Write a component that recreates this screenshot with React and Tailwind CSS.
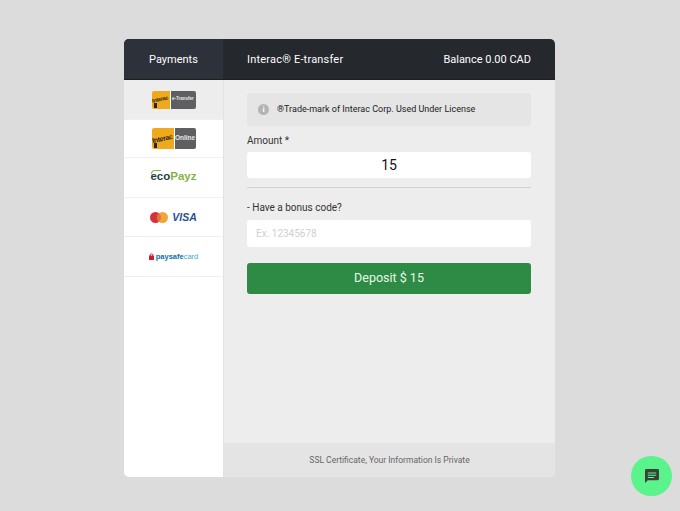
import React from 'react';

const InteracBadge = ({ label, yellow, height, small }) => (
  <div className={`flex ${height} w-[44px] rounded-[2px] overflow-hidden`}>
    <div className={`${yellow} bg-[#efa91d] relative flex items-center justify-center shrink-0`}>
      <span className={`${small ? 'text-[5.5px]' : 'text-[7px]'} font-bold text-[#2b2413] -rotate-12 leading-none tracking-tighter font-['Liberation_Sans',sans-serif]`}>Interac</span>
      <span className="absolute left-[2px] bottom-[1px] w-[3px] h-[5px] bg-[#2b2413]"></span>
    </div>
    <div className={`flex-1 min-w-0 bg-[#5f5f61] border-l border-white flex items-center justify-center font-bold text-[#e8e8e8] leading-none whitespace-nowrap font-['Liberation_Sans',sans-serif] ${small ? 'text-[4.5px]' : 'text-[6.5px]'}`}>{label}</div>
  </div>
);

const EcoPayz = () => (
  <div className="relative flex items-baseline font-bold text-[11.5px] leading-none mb-[1px] font-['Liberation_Sans',sans-serif]">
    <span className="text-[#1f3f4a]">eco</span>
    <span className="text-[#83b441]">Payz</span>
    <span className="absolute -top-[1px] left-[1px] w-[10px] h-[4px] border-t border-l border-[#83b441] rounded-tl-full"></span>
  </div>
);

const MasterVisa = () => (
  <div className="flex items-center gap-[4px]">
    <svg width="18" height="11" viewBox="0 0 18 11">
      <circle cx="5.5" cy="5.5" r="5.5" fill="#d3343c" />
      <circle cx="12.5" cy="5.5" r="5.5" fill="#f1a43a" />
      <path d="M9 1.3a5.5 5.5 0 0 1 0 8.4a5.5 5.5 0 0 1 0-8.4z" fill="#e8703a" />
    </svg>
    <span className="text-[10.5px] font-bold italic text-[#27518f] leading-none font-['Liberation_Sans',sans-serif]">VISA</span>
  </div>
);

const PaySafe = () => (
  <div className="flex items-center gap-[2px] text-[7.5px] leading-none font-['Liberation_Sans',sans-serif]">
    <svg width="5" height="7" viewBox="0 0 5 7">
      <path d="M1.2 3V2a1.3 1.3 0 0 1 2.6 0v1" fill="none" stroke="#c8202f" strokeWidth="0.8" />
      <rect x="0" y="2.6" width="5" height="4.4" rx="0.6" fill="#c8202f" />
    </svg>
    <span><span className="font-bold text-[#0f6fa8]">paysafe</span><span className="text-[#4aa3cf]">card</span></span>
  </div>
);

const methods = [
  { key: 'etransfer', h: 'h-[40px] bg-[#ededed]', logo: <InteracBadge label="e-Transfer" yellow="w-[18px]" height="h-[18px]" small /> },
  { key: 'online', h: 'h-[38px] bg-white', logo: <InteracBadge label="Online" yellow="w-[22px]" height="h-[21px]" /> },
  { key: 'eco', h: 'h-[40px] bg-white', logo: <EcoPayz /> },
  { key: 'cards', h: 'h-[39px] bg-white', logo: <MasterVisa /> },
  { key: 'paysafe', h: 'h-[40px] bg-white', logo: <PaySafe /> },
];

const App = () => {
  return (
    <div className="w-[680px] h-[511px] bg-[#dcdcdc] pt-[39px] pl-[124px] overflow-hidden relative font-['Roboto',sans-serif]">
      <div className="w-[431px] h-[438px] rounded-[5px] overflow-hidden flex flex-col bg-[#ededed]">
        <div className="h-[41px] flex bg-[#25282d] text-white text-[11px] shrink-0 border-b border-[#1d1f23]">
          <div className="w-[99px] bg-[#2d323a] flex items-center justify-center pt-[2px]">Payments</div>
          <div className="flex-1 flex items-center justify-between pl-[24px] pr-[24px] pt-[2px]">
            <span className="tracking-[0.2px]">Interac® E-transfer</span>
            <span>Balance 0.00 CAD</span>
          </div>
        </div>
        <div className="flex flex-1 min-h-0">
          <div className="w-[100px] shrink-0 bg-white border-r border-[#e2e2e2]">
            {methods.map((m) => (
              <div key={m.key} className={`${m.h} flex items-center justify-center border-b border-[#f0f0f0]`}>
                {m.logo}
              </div>
            ))}
          </div>
          <div className="flex-1 flex flex-col">
            <div className="flex-1 pl-[23px] pr-[24px] pt-[13px]">
              <div className="h-[33px] rounded-[3px] bg-[#e5e5e5] flex items-center pl-[11px] gap-[8px] text-[9px] text-[#222]">
                <span className="w-[11px] h-[11px] rounded-full bg-[#b4b4b4] text-white text-[8px] font-bold flex items-center justify-center leading-none">i</span>
                <span>®Trade-mark of Interac Corp. Used Under License</span>
              </div>
              <div className="mt-[8px] text-[10px] leading-[13px] text-[#333]">Amount *</div>
              <div className="mt-[5px] h-[26px] rounded-[3px] bg-white flex items-center justify-center text-[14px] text-[#111]">15</div>
              <div className="mt-[9px] border-t border-[#cfcfcf]"></div>
              <div className="mt-[13px] text-[10px] leading-[13px] text-[#333]">- Have a bonus code?</div>
              <div className="mt-[6px] h-[27px] rounded-[3px] bg-white flex items-center pl-[9px] text-[10px] text-[#cfcfcf]">Ex. 12345678</div>
              <div className="mt-[16px] h-[31px] rounded-[3px] bg-[#2e8b45] flex items-center justify-center text-[12.5px] text-[#e8f8e8]">Deposit $ 15</div>
            </div>
            <div className="h-[34px] bg-[#e4e4e4] flex items-center justify-center text-[8.5px] text-[#666]">SSL Certificate, Your Information Is Private</div>
          </div>
        </div>
      </div>
      <div className="absolute left-[631px] top-[456px] w-[41px] h-[40px] rounded-full bg-[#5bf38b] flex items-center justify-center">
        <svg width="14" height="14" viewBox="2 2 20 20">
          <path d="M20 2H4a2 2 0 0 0-2 2v18l4-4h14a2 2 0 0 0 2-2V4a2 2 0 0 0-2-2z" fill="#3a3f3a" />
          <path d="M6 7h12v1.6H6zM6 10.2h12v1.6H6zM6 13.4h9V15H6z" fill="#5bf38b" />
        </svg>
      </div>
    </div>
  );
};

export default App;
